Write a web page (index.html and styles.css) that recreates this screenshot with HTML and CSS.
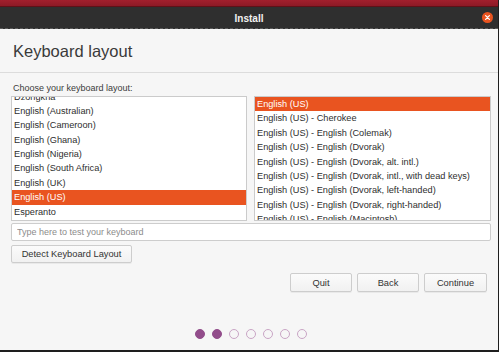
FILE: index.html
```html
<!DOCTYPE html>
<html lang="en">
<head>
<meta charset="utf-8">
<title>Install</title>
<link rel="stylesheet" href="styles.css">
</head>
<body>
<div class="window">
  <div class="topbar"></div>
  <header class="titlebar">
    <span></span>
    <span class="title">Install</span>
    <span class="close">
      <svg width="11" height="11" viewBox="0 0 11 11"><circle cx="5.5" cy="5.5" r="5.5" fill="#e95420"/><path d="M3.6 3.6 L7.4 7.4 M7.4 3.6 L3.6 7.4" stroke="#fff" stroke-width="1.3" stroke-linecap="round"/></svg>
    </span>
  </header>
  <div class="heading"><h1>Keyboard layout</h1></div>
  <main class="content">
    <div class="label">Choose your keyboard layout:</div>
    <div class="lists">
      <div class="list">
        <ul class="rows scrolled">
          <li>Dzongkha</li>
          <li>English (Australian)</li>
          <li>English (Cameroon)</li>
          <li>English (Ghana)</li>
          <li>English (Nigeria)</li>
          <li>English (South Africa)</li>
          <li>English (UK)</li>
          <li class="sel">English (US)</li>
          <li>Esperanto</li>
        </ul>
      </div>
      <div class="list">
        <ul class="rows">
          <li class="sel">English (US)</li>
          <li>English (US) - Cherokee</li>
          <li>English (US) - English (Colemak)</li>
          <li>English (US) - English (Dvorak)</li>
          <li>English (US) - English (Dvorak, alt. intl.)</li>
          <li>English (US) - English (Dvorak, intl., with dead keys)</li>
          <li>English (US) - English (Dvorak, left-handed)</li>
          <li>English (US) - English (Dvorak, right-handed)</li>
          <li>English (US) - English (Macintosh)</li>
        </ul>
      </div>
    </div>
    <input class="test" type="text" placeholder="Type here to test your keyboard">
    <div class="detect-row"><button class="btn detect">Detect Keyboard Layout</button></div>
    <div class="footer">
      <button class="btn nav">Quit</button>
      <button class="btn nav">Back</button>
      <button class="btn nav cont">Continue</button>
    </div>
    <div class="dots">
      <span class="dot on"></span>
      <span class="dot on"></span>
      <span class="dot"></span>
      <span class="dot"></span>
      <span class="dot"></span>
      <span class="dot"></span>
      <span class="dot"></span>
    </div>
  </main>
</div>
</body>
</html>
```

FILE: styles.css
```css
* { box-sizing: border-box; }
html, body { margin: 0; padding: 0; background: #ffffff; }
body { font-family: "Liberation Sans", Arial, sans-serif; color: #3c3c3c; }

.window {
  width: 499px;
  height: 352px;
  background: #f6f6f6;
  border-right: 1px solid #1e1e1e;
  border-bottom: 2px solid #1e1e1e;
  display: flex;
  flex-direction: column;
  overflow: hidden;
}

.topbar {
  height: 7px;
  background: linear-gradient(#a11f2d, #8c1a26);
  border-bottom: 1px solid #5e1118;
}

.titlebar {
  height: 22px;
  background: #2f2f2f;
  border-bottom: 1px dashed #5c5c5c;
  display: grid;
  grid-template-columns: 1fr auto 1fr;
  align-items: center;
}
.title {
  color: #f2f2f2;
  font-weight: bold;
  font-size: 10px;
  padding-top: 1px;
}
.close {
  justify-self: end;
  margin-right: 5px;
  height: 11px;
}
.close svg { display: block; }

.heading {
  height: 44px;
  padding: 12px 0 0 13px;
  border-bottom: 1px solid #dcdcdc;
}
h1 {
  margin: 0;
  font-weight: normal;
  font-size: 16.5px;
  line-height: 20px;
  color: #3a3a3a;
}

.content {
  flex: 1;
  padding: 8px 8px 0 11px;
  display: flex;
  flex-direction: column;
}

.label {
  font-size: 9px;
  line-height: 14px;
  padding-left: 2px;
  margin-bottom: 1px;
}

.lists {
  display: grid;
  grid-template-columns: 236px 237px;
  gap: 7px;
  height: 125px;
}
.list {
  background: #ffffff;
  border: 1px solid #cbcbcb;
  overflow: hidden;
}
.rows {
  list-style: none;
  margin: 0;
  padding: 0;
}
.rows.scrolled { margin-top: -7.5px; }
.rows li {
  height: 14.4px;
  line-height: 14.4px;
  font-size: 9.2px;
  padding-left: 2px;
  white-space: nowrap;
  color: #2e2e2e;
}
.rows li.sel {
  background: #e95420;
  color: #ffffff;
}

.test {
  margin-top: 2px;
  height: 18px;
  width: 480px;
  border: 1px solid #cdcdcd;
  border-radius: 2px;
  background: #ffffff;
  font-family: "Liberation Sans", Arial, sans-serif;
  font-size: 9px;
  padding: 0 5px;
  outline: none;
}
.test::placeholder { color: #8c8c8c; }

.detect-row { margin-top: 4px; display: flex; }

.btn {
  font-family: "Liberation Sans", Arial, sans-serif;
  font-size: 9px;
  color: #333333;
  background: linear-gradient(#fbfbfb, #f1f1f1);
  border: 1px solid #cdcdcd;
  border-radius: 2px;
  box-shadow: 0 1px 0 rgba(0,0,0,0.05);
  padding: 0;
  height: 18px;
}
.detect { width: 121px; font-size: 9.3px; }

.footer {
  margin-top: 10px;
  display: flex;
  justify-content: flex-end;
  gap: 5px;
  padding-right: 3px;
}
.nav { width: 62px; height: 19px; font-size: 9.3px; }
.nav.cont { width: 63px; }

.dots {
  margin-top: 37px;
  display: flex;
  justify-content: center;
  gap: 7px;
}
.dot {
  width: 10px;
  height: 10px;
  border-radius: 50%;
  border: 1.5px solid #c9a5c5;
  background: transparent;
}
.dot.on {
  background: #924d8b;
  border-color: #924d8b;
}
```
